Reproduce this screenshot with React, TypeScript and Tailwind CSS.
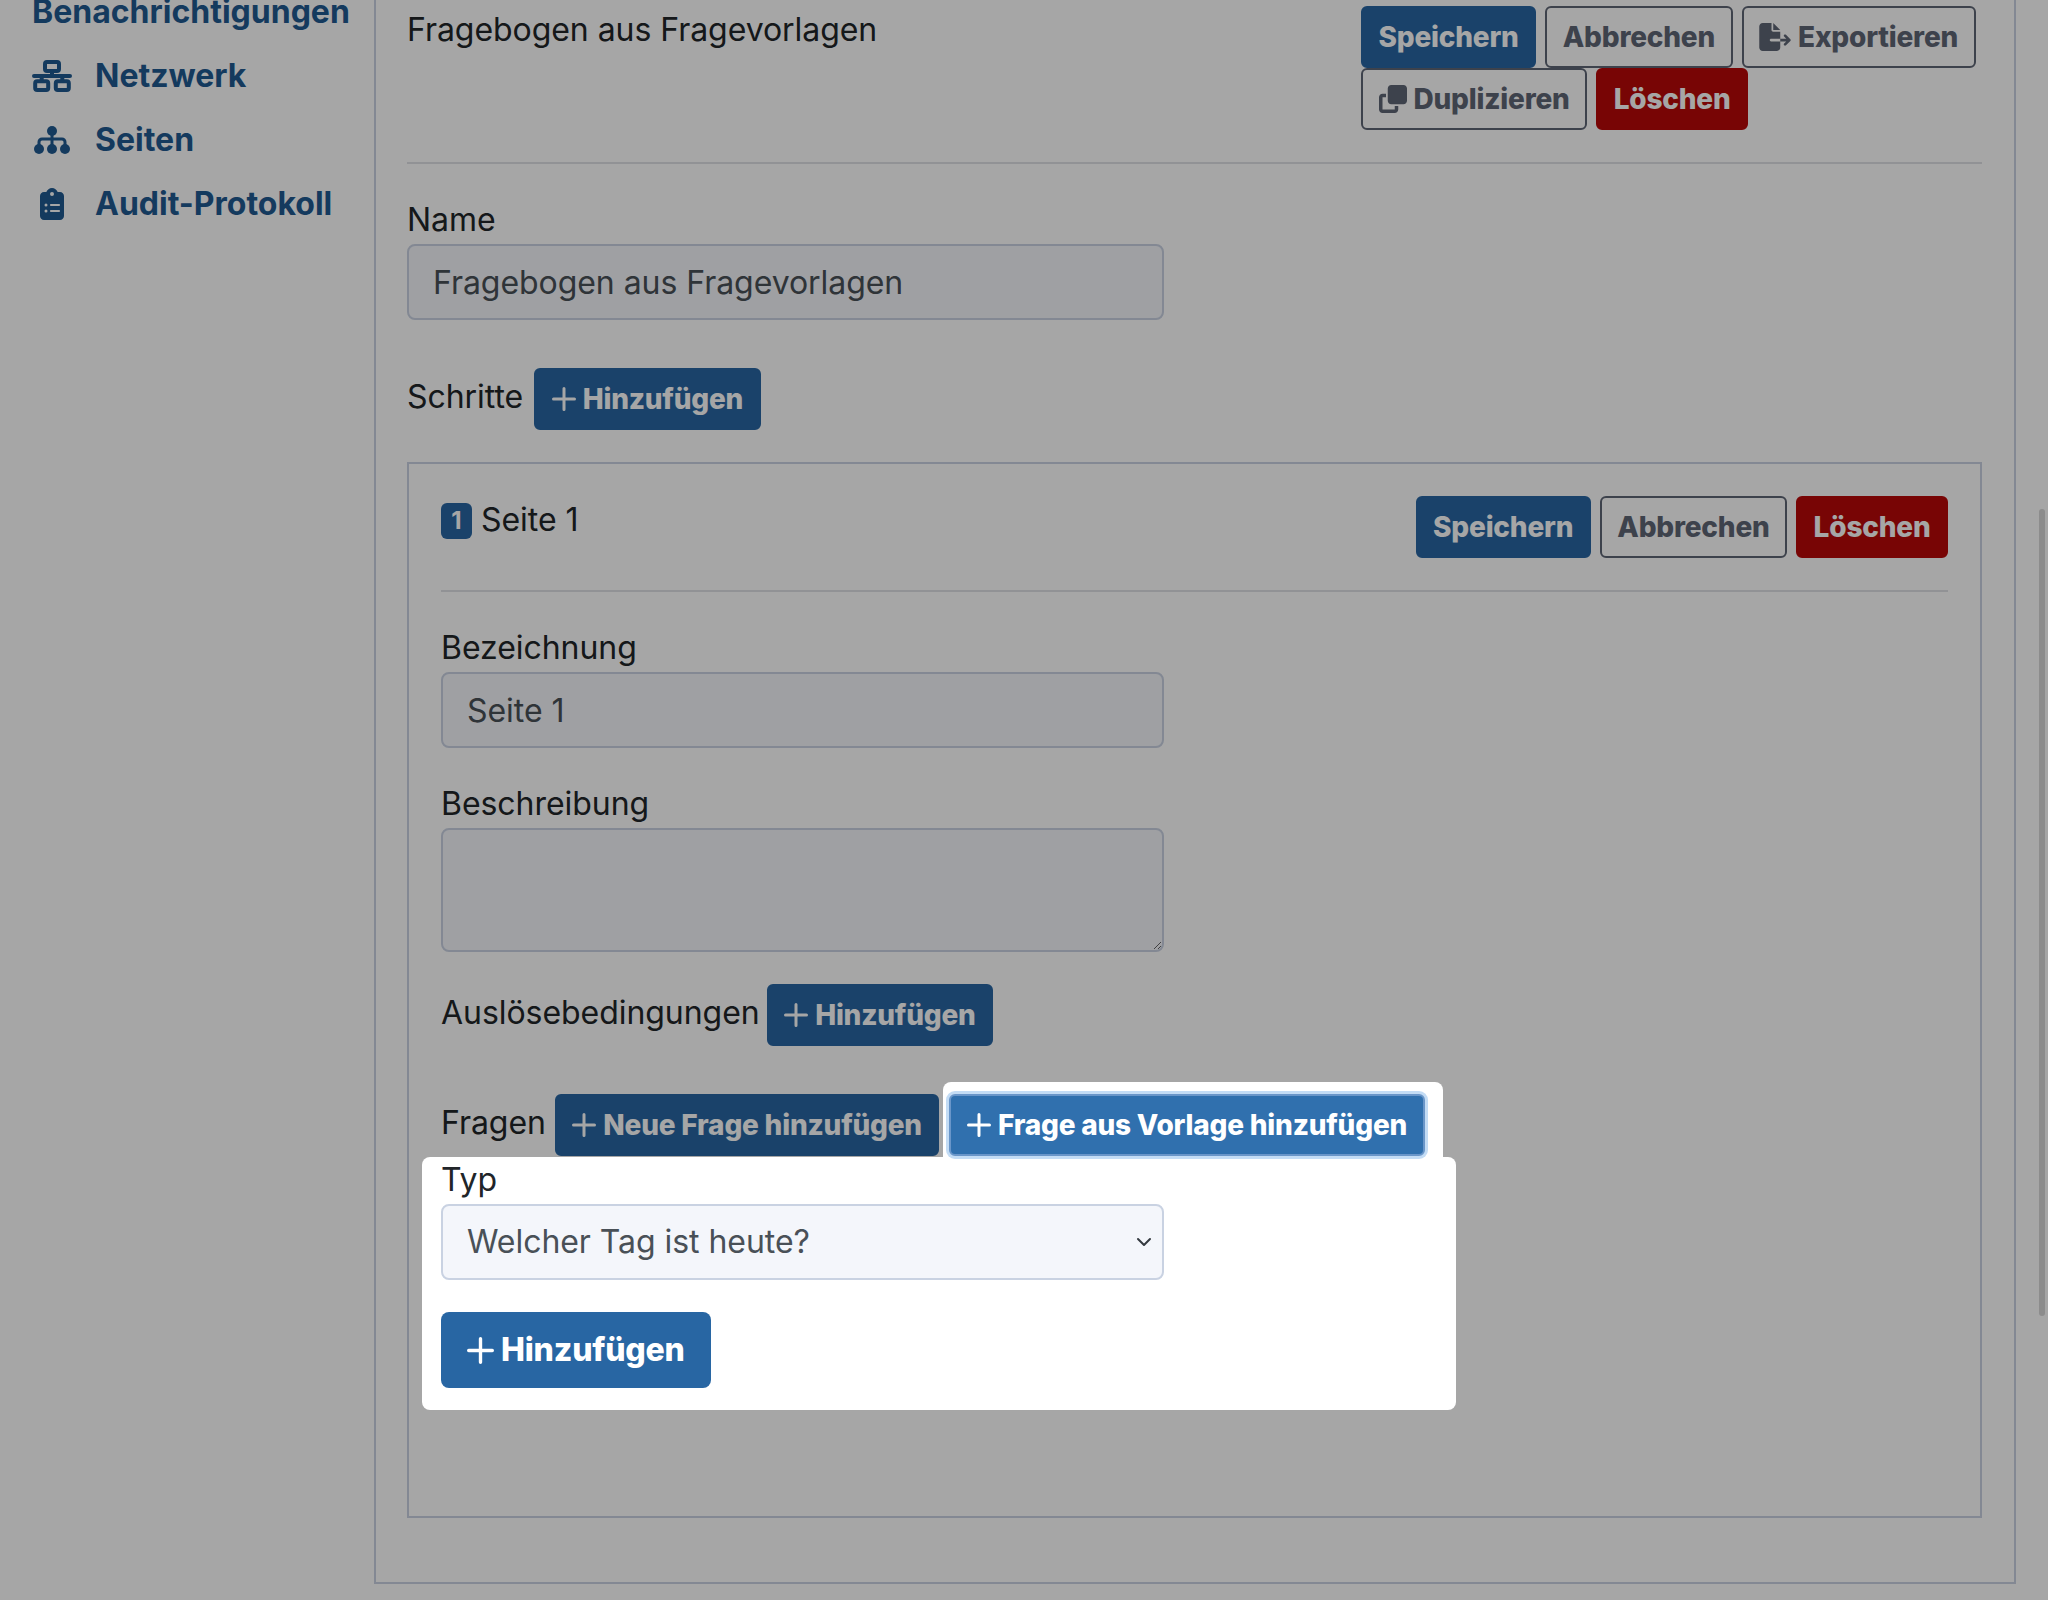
import type { ReactNode } from 'react'
import { FaClipboardList, FaClone, FaFileExport } from 'react-icons/fa6'
import { ChevronDown } from 'lucide-react'

function NetworkIcon() {
  return (
    <svg viewBox="0 0 40 32" className="w-[40px] h-[32px]" fill="none" stroke="currentColor" strokeWidth="4" strokeLinecap="round">
      <rect x="13" y="2" width="14" height="9" rx="2" />
      <rect x="3.2" y="21.2" width="13" height="8.8" rx="2" />
      <rect x="23.8" y="21.2" width="13" height="8.8" rx="2" />
      <path d="M20 11v5M2 16h36M9.7 16v5M30.3 16v5" />
    </svg>
  )
}

function SitemapIcon() {
  return (
    <svg viewBox="0 0 36 28" className="w-[36px] h-[28px]" fill="currentColor">
      <circle cx="18" cy="5" r="5" />
      <circle cx="5" cy="23" r="5" />
      <circle cx="18" cy="23" r="5" />
      <circle cx="31" cy="23" r="5" />
      <path d="M18 5v16M5 20v-4a3 3 0 0 1 3-3h20a3 3 0 0 1 3 3v4" fill="none" stroke="currentColor" strokeWidth="3" />
    </svg>
  )
}

function PlusIcon({ size }: { size: number }) {
  return (
    <svg viewBox="0 0 24 24" style={{ width: size, height: size }} className="shrink-0" fill="none" stroke="currentColor" strokeWidth="3" strokeLinecap="round">
      <path d="M12 1.5v21M1.5 12h21" />
    </svg>
  )
}

const NAV = [
  { label: 'Netzwerk', icon: <NetworkIcon /> },
  { label: 'Seiten', icon: <SitemapIcon /> },
  { label: 'Audit-Protokoll', icon: <FaClipboardList className="w-[24px] h-[32px]" /> },
]

type Variant = 'primary' | 'outline' | 'danger'

const VARIANTS: Record<Variant, string> = {
  primary: 'bg-[#2866a3] border-[#2866a3] text-white',
  outline: 'bg-transparent border-[#5f6675] text-[#5f6675]',
  danger: 'bg-[#b90808] border-[#b90808] text-white',
}

function Btn({ variant = 'primary', children }: { variant?: Variant; children: ReactNode }) {
  return (
    <button className={`inline-flex items-center h-[62px] px-[15.5px] border-2 rounded-[6px] text-[28px] font-extrabold tracking-[-0.2px] whitespace-nowrap ${VARIANTS[variant]}`}>
      {children}
    </button>
  )
}

function AddLabel({ children }: { children: ReactNode }) {
  return (
    <>
      <PlusIcon size={24} />
      <span className="ml-[7px]">{children}</span>
    </>
  )
}

const fieldClass = 'block h-[76px] px-[24px] border-2 border-[#c9d2e2] rounded-[8px] bg-[#f4f6fb] text-[32px] text-[#495057] outline-none'

export default function App() {
  return (
    <div className="relative h-[1600px] overflow-hidden bg-white font-['Inter',sans-serif] text-[#212529]">
      <div className="flex items-start -mt-[60px]">

        {/* Sidebar */}
        <aside className="w-[374px] shrink-0 pt-[40px] pl-[32px] text-[#1f5a91] text-[32px] font-bold">
          <div className="h-[64px] flex items-center whitespace-nowrap">Benachrichtigungen</div>
          {NAV.map(({ label, icon }) => (
            <div key={label} className="h-[64px] flex items-center">
              <span className="w-[40px] flex justify-center mr-[23px]">{icon}</span>
              {label}
            </div>
          ))}
        </aside>

        {/* Main panel */}
        <main className="w-[1642px] border-2 border-[#c9d2e2] pt-[64px] pl-[31px] pr-[32px] pb-[64px] text-[32px] tracking-[-0.05px]">
          <div className="flex justify-between items-start pb-[32px] border-b-2 border-[#dfe1e5]">
            <div className="leading-[48px]">Fragebogen aus Fragevorlagen</div>
            <div className="w-[621px] flex flex-wrap gap-x-[9px]">
              <Btn>Speichern</Btn>
              <Btn variant="outline">Abbrechen</Btn>
              <Btn variant="outline"><FaFileExport className="w-[32px] h-[28px] mr-[7px]" />Exportieren</Btn>
              <Btn variant="outline"><FaClone className="w-[28px] h-[28px] mr-[7px]" />Duplizieren</Btn>
              <Btn variant="danger">Löschen</Btn>
            </div>
          </div>

          <label className="block mt-[31px] h-[49px] leading-[50px]">Name</label>
          <input readOnly value="Fragebogen aus Fragevorlagen" className={`${fieldClass} w-[757px]`} />

          <div className="flex items-center gap-[11px] mt-[48px]">
            <span className="-mt-[4px]">Schritte</span>
            <Btn><AddLabel>Hinzufügen</AddLabel></Btn>
          </div>

          {/* Step card */}
          <section className="mt-[32px] border-2 border-[#c9d2e2] pt-[32px] px-[32px] pb-[106px]">
            <div className="flex justify-between items-start pb-[32px] border-b-2 border-[#dfe1e5]">
              <div className="flex items-center h-[48px]">
                <span className="w-[31px] h-[36px] mt-[1px] mr-[9px] rounded-[6px] bg-[#2866a3] text-white text-[24px] font-bold flex items-center justify-center">1</span>
                Seite 1
              </div>
              <div className="flex gap-x-[9px]">
                <Btn>Speichern</Btn>
                <Btn variant="outline">Abbrechen</Btn>
                <Btn variant="danger">Löschen</Btn>
              </div>
            </div>

            <label className="block mt-[32px] h-[48px] leading-[48px]">Bezeichnung</label>
            <input readOnly value="Seite 1" className={`${fieldClass} w-[723px]`} />

            <label className="block mt-[32px] h-[48px] leading-[48px]">Beschreibung</label>
            <textarea readOnly className={`${fieldClass} w-[723px] h-[124px]`} />

            <div className="flex items-center gap-[7px] mt-[32px]">
              <span className="-mt-[4px]">Auslösebedingungen</span>
              <Btn><AddLabel>Hinzufügen</AddLabel></Btn>
            </div>

            <div className="flex items-center gap-[9px] mt-[48px]">
              <span className="-mt-[4px]">Fragen</span>
              <Btn><AddLabel>Neue Frage hinzufügen</AddLabel></Btn>
              {/* highlighted by the tour */}
              <div className="relative z-30 ml-[1px]">
                <div className="absolute -left-[6px] -top-[12px] -right-[18px] -bottom-[2px] rounded-t-[8px] bg-white" />
                <button className="relative inline-flex items-center h-[62px] px-[15.5px] rounded-[6px] border-2 border-[#6a96c9] bg-[#3070ae] text-white text-[28px] font-extrabold tracking-[-0.2px] whitespace-nowrap ring-[3px] ring-[#c3dcf5]">
                  <AddLabel>Frage aus Vorlage hinzufügen</AddLabel>
                </button>
              </div>
            </div>

            {/* Tour popover */}
            <div className="relative z-20 -ml-[19px] mt-[1px] w-[1034px] rounded-[8px] bg-white pl-[19px] pb-[22px]">
              <label className="block h-[47px] leading-[46px]">Typ</label>
              <div className="relative w-[723px]">
                <select className={`${fieldClass} w-full appearance-none`}>
                  <option>Welcher Tag ist heute?</option>
                </select>
                <ChevronDown className="absolute right-[8px] top-[26px] w-[24px] h-[24px] text-[#343a40]" strokeWidth={2} />
              </div>
              <button className="mt-[32px] inline-flex items-center h-[76px] px-[26px] rounded-[8px] bg-[#2866a3] text-white text-[32px] font-extrabold tracking-[-0.2px]">
                <PlusIcon size={27} />
                <span className="ml-[7px]">Hinzufügen</span>
              </button>
            </div>
          </section>
        </main>
      </div>

      {/* Dim layer and scrollbar */}
      <div className="absolute inset-0 z-10 bg-black/35" />
      <div className="absolute z-10 left-[2039px] top-[509px] w-[6px] h-[807px] rounded-full bg-[#8c8c8c]" />
    </div>
  )
}
